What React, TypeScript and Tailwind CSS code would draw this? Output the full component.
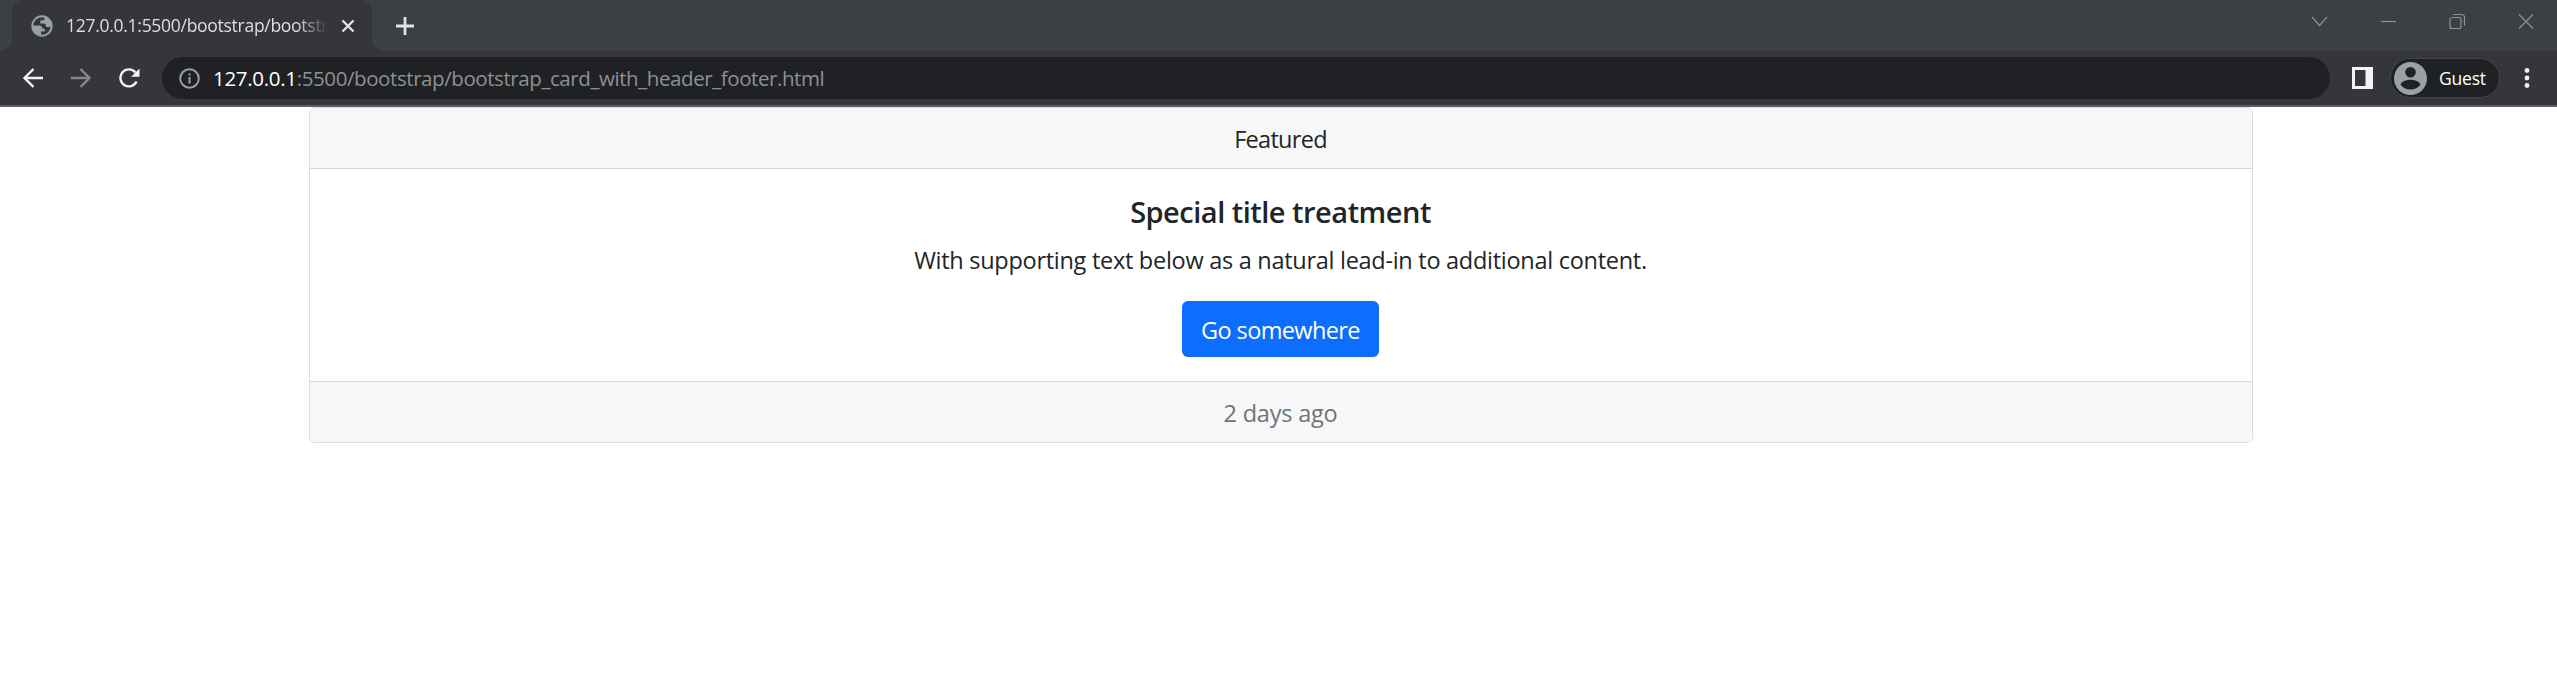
import React from "react";

const FONT = "font-['Open_Sans','Noto_Sans',sans-serif]";

function Globe() {
  return (
    <svg className="ml-[19px] h-[22px] w-[22px] shrink-0" viewBox="0 0 22 22">
      <circle cx="11" cy="11" r="9.700" fill="none" stroke="#9aa0a6" strokeWidth="2" />
      <path
        fill="#9aa0a6"
        d="M1.500 10.500h6.500c2.200.1 3.400 1.200 3.500 3.200h2.300v2.900H10v3.900C4.500 20.500 1 16 1.500 10.500zM13.500 1.800v1.700c0 1-.8 1.900-1.900 1.900H9.200v3h3.600c1.200 0 1.900.8 1.900 1.800 0 1.200.8 1.900 1.900 1.900h3.900c.6-4.800-2.500-9-7-10.300z"
      />
    </svg>
  );
}

function TabStrip() {
  return (
    <div className="flex h-[51px] bg-[#3c4043]">
      <div className="flex w-3 items-end bg-[#35363a]">
        <div className="h-full w-full rounded-br-[12px] bg-[#3c4043]" />
      </div>
      <div className="flex w-[360px] items-center rounded-t-[12px] bg-[#35363a]">
        <Globe />
        <div className="ml-[13px] w-[262px] overflow-hidden whitespace-nowrap text-[17.5px] tracking-[-0.28px] text-[#dcdfe2] [mask-image:linear-gradient(to_right,#000_88%,transparent)]">
          127.0.0.1:5500/bootstrap/bootstrap
        </div>
        <svg className="ml-[13px] h-[14px] w-[14px]" viewBox="0 0 14 14" stroke="#dfe1e5" strokeWidth="2.400">
          <path d="M1.500 1.500l11 11M12.500 1.500l-11 11" />
        </svg>
      </div>
      <div className="flex-1 bg-[#35363a]">
        <div className="flex h-full items-center rounded-bl-[12px] bg-[#3c4043]">
          <svg className="ml-6 h-[18px] w-[18px]" viewBox="0 0 18 18" stroke="#dfe1e5" strokeWidth="2.800">
            <path d="M9 0v18M0 9h18" />
          </svg>
          <div className="flex-1" />
          <svg className="mb-2 h-[20px] w-[226px]" viewBox="0 0 226 20" fill="none" stroke="#8f9295" strokeWidth="1.200">
            <path d="M1 5l7.500 8.500L16 5" />
            <path d="M70 9.500h15" />
            <rect x="139" y="5.500" width="11" height="11" rx="2" />
            <path d="M142 2.500h8.500a3 3 0 0 1 3 3v8" />
            <path d="M208 2.500l14 14M222 2.500l-14 14" />
          </svg>
          <div className="w-[20px]" />
        </div>
      </div>
    </div>
  );
}

function Toolbar() {
  return (
    <div className="flex h-[56px] border-b-2 border-[#5d5e62] bg-[#35363a] pt-[6px]">
      <svg className="mt-[11px] ml-[22px] h-[20px] w-[118px]" viewBox="0 0 118 20" fill="none" strokeWidth="2.400">
        <path d="M21 10H2.500M11.500 1L2.500 10l9 9" stroke="#f1f3f4" />
        <path d="M49 10h18.500M58.500 1l9 9-9 9" stroke="#85878a" />
        <path d="M114.600 13.500A8.500 8.500 0 1 1 113.500 4.500" stroke="#f1f3f4" />
        <path d="M117.500 0.500v8.300h-8.300z" fill="#f1f3f4" />
      </svg>
      <div className="ml-[22px] flex h-[42px] w-[2168px] items-center rounded-full bg-[#202124]">
        <svg className="ml-[17px] h-[21px] w-[21px]" viewBox="0 0 21 21" fill="none" stroke="#9aa0a6" strokeWidth="2">
          <circle cx="10.500" cy="10.500" r="9.300" />
          <path d="M10.500 9v6.500M10.500 5.500v2" />
        </svg>
        <div className="ml-[13px] text-[20.5px] tracking-[-0.42px] whitespace-nowrap text-[#8e9194]">
          <span className="tracking-[-0.3px] text-white">127.0.0.1</span>:5500/bootstrap/bootstrap_card_with_header_footer.html
        </div>
      </div>
      <svg className="mt-[10px] ml-[22px] h-[22px] w-[21px]" viewBox="0 0 21 22">
        <path fillRule="evenodd" fill="#f1f3f4" d="M0 0h21v22H0zM3 3v16h10.500V3z" />
      </svg>
      <div className="mt-[1px] ml-[17px] flex h-[40px] w-[110px] items-center rounded-full border border-[#434448] bg-[#202124]">
        <svg className="ml-[3px] h-[33px] w-[33px]" viewBox="2 2 20 20" fill="#9aa0a6">
          <path fillRule="evenodd" d="M12 2a10 10 0 1 0 0 20 10 10 0 0 0 0-20zm0 3a3.200 3.200 0 1 1 0 6.400A3.200 3.200 0 0 1 12 5zm0 13.700c-2.500 0-4.710-1.100-6-2.900.03-1.990 4-3.080 6-3.080s5.970 1.090 6 3.080c-1.290 1.800-3.500 2.900-6 2.900z" />
        </svg>
        <span className="ml-3 text-[17.5px] tracking-[-0.2px] text-white">Guest</span>
      </div>
      <svg className="mt-[11px] ml-[24px] h-[20px] w-[6px]" viewBox="0 0 6 20" fill="#f1f3f4">
        <circle cx="3" cy="2.500" r="2.400" />
        <circle cx="3" cy="10" r="2.400" />
        <circle cx="3" cy="17.500" r="2.400" />
      </svg>
    </div>
  );
}

export default function App() {
  return (
    <div className={`h-[676px] w-[2557px] overflow-hidden bg-white ${FONT}`}>
      <TabStrip />
      <Toolbar />
      <div className="ml-[309px] w-[1944px] rounded-[6px] border border-[#dcdcdc] text-center text-[23.5px] text-[#212529]">
        <div className="h-[61px] rounded-t-[5px] border-b border-[#d8d8d8] bg-[#f7f7f7] pr-px leading-[63px] tracking-[-0.7px]">Featured</div>
        <div className="flex h-[212px] flex-col items-center pt-[25px] pr-px">
          <h5 className="text-[29px] leading-[36px] font-semibold tracking-[-0.5px]">Special title treatment</h5>
          <p className="mt-3 leading-9 tracking-[-0.28px]">With supporting text below as a natural lead-in to additional content.</p>
          <a className="mt-[23px] h-[56px] w-[197px] rounded-[6px] bg-[#0d6efd] leading-[58px] tracking-[-0.62px] text-white">Go somewhere</a>
        </div>
        <div className="h-[61px] rounded-b-[5px] border-t border-[#d8d8d8] bg-[#f7f7f7] pr-px leading-[62px] tracking-[-0.2px] text-[#6c757d]">2 days ago</div>
      </div>
    </div>
  );
}
